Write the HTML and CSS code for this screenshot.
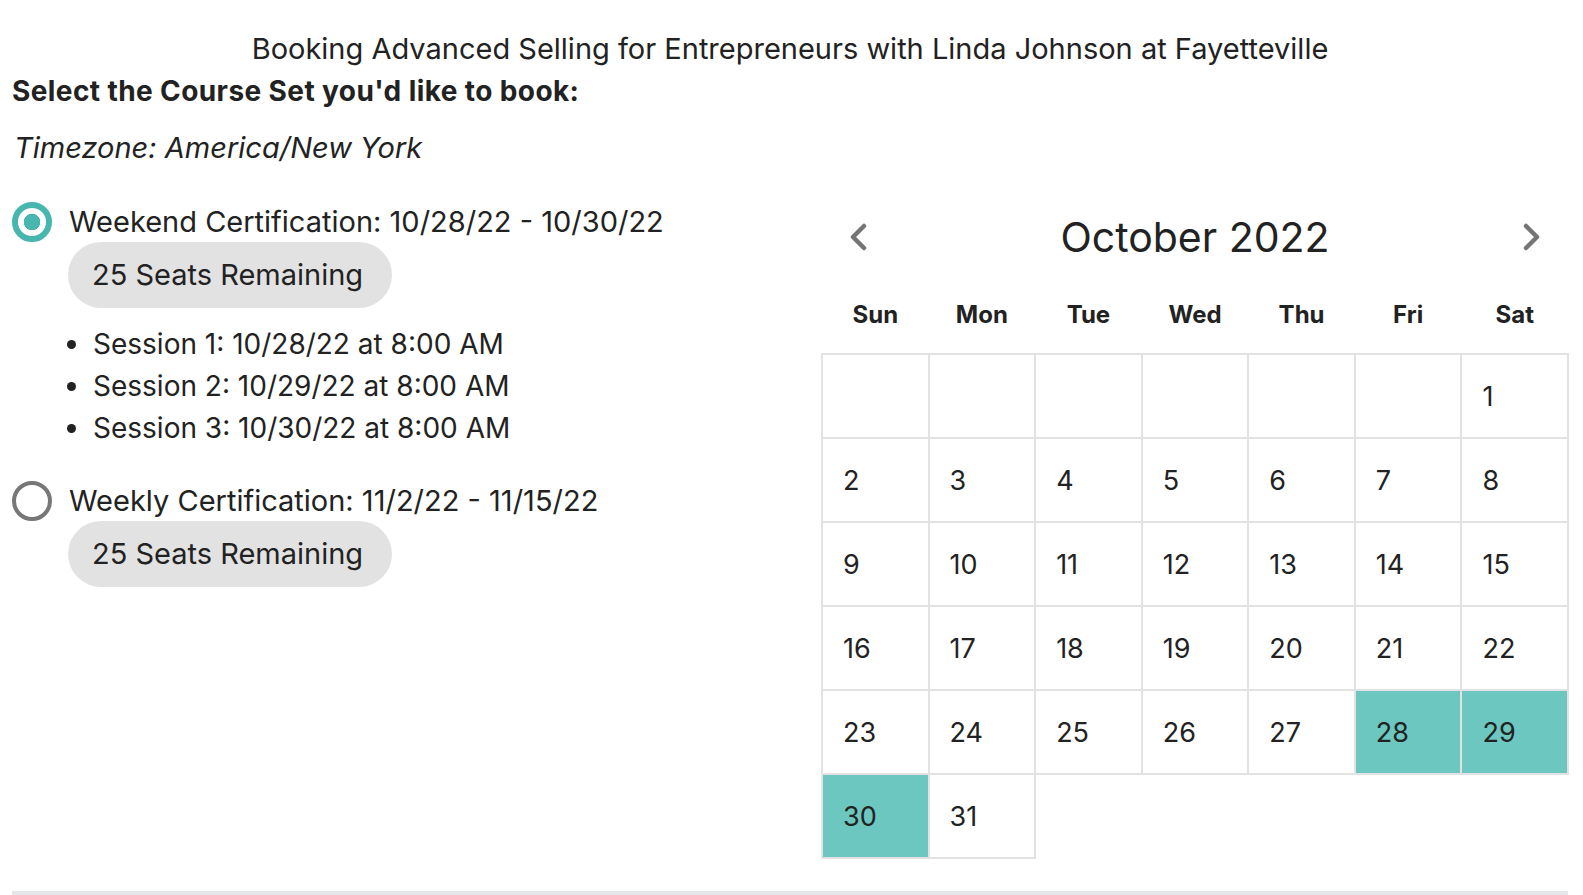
FILE: index.html
```html
<!DOCTYPE html>
<html lang="en">
<head>
    <meta charset="utf-8">
    <meta name="viewport" content="width=device-width, initial-scale=1.0">
    <title>Book a Course Set</title>
    <link rel="stylesheet" href="styles.css">
</head>
<body>
<div class="page">
    <h1 class="title">Booking Advanced Selling for Entrepreneurs with Linda Johnson at Fayetteville</h1>
    <h2 class="prompt">Select the Course Set you'd like to book:</h2>
    <p class="timezone">Timezone: America/New York</p>

    <div class="main">
        <div class="sets">
            <div class="set">
                <label class="set-head">
                    <span class="radio checked"></span>
                    Weekend Certification: 10/28/22 - 10/30/22
                </label>
                <div class="seats">25 Seats Remaining</div>
                <ul class="sessions">
                    <li>Session 1: 10/28/22 at 8:00 AM</li>
                    <li>Session 2: 10/29/22 at 8:00 AM</li>
                    <li>Session 3: 10/30/22 at 8:00 AM</li>
                </ul>
            </div>
            <div class="set">
                <label class="set-head">
                    <span class="radio"></span>
                    Weekly Certification: 11/2/22 - 11/15/22
                </label>
                <div class="seats">25 Seats Remaining</div>
            </div>
        </div>

        <div class="calendar">
            <div class="cal-head">
                <button class="nav" aria-label="Previous month">
                    <svg width="18" height="28" viewBox="0 0 18 28"><path d="M15 3 L4 14 L15 25" /></svg>
                </button>
                <div class="month">October 2022</div>
                <button class="nav" aria-label="Next month">
                    <svg width="18" height="28" viewBox="0 0 18 28"><path d="M3 3 L14 14 L3 25" /></svg>
                </button>
            </div>
            <div class="weekdays">
                <div>Sun</div><div>Mon</div><div>Tue</div><div>Wed</div><div>Thu</div><div>Fri</div><div>Sat</div>
            </div>
            <div class="days" id="days"></div>
        </div>
    </div>

    <hr class="bottom-line">
</div>

<script>
    var days = document.getElementById('days');
    var firstDay = 6; // Oct 1 2022 is a Saturday
    var booked = [28, 29, 30];
    for (var i = 0; i < firstDay; i++) {
        var blank = document.createElement('div');
        blank.className = 'day';
        days.appendChild(blank);
    }
    for (var d = 1; d <= 31; d++) {
        var cell = document.createElement('div');
        cell.className = 'day';
        if (booked.indexOf(d) !== -1) {
            cell.className += ' booked';
        }
        cell.textContent = d;
        days.appendChild(cell);
    }
</script>
</body>
</html>
```

FILE: styles.css
```css
body {
    margin: 0;
    padding: 0;
    background: #fff;
    color: #222;
    font-family: "Inter", "Liberation Sans", sans-serif;
}

.page {
    padding: 29px 15px 0 12px;
}

.title {
    margin: 0;
    font-size: 29px;
    font-weight: 400;
    line-height: 40px;
    text-align: center;
}

.prompt {
    margin: 4px 0 0;
    font-size: 28px;
    font-weight: 700;
    letter-spacing: 0.4px;
    line-height: 36px;
}

.timezone {
    margin: 19px 0 0;
    font-size: 29px;
    font-style: italic;
    line-height: 40px;
    padding-left: 2px;
}

.main {
    display: flex;
    align-items: flex-start;
    margin-top: 34px;
}

.sets {
    flex: 1;
}

.set {
    margin-bottom: 32px;
}

.set-head {
    display: flex;
    align-items: center;
    gap: 17px;
    font-size: 29px;
    line-height: 40px;
    cursor: pointer;
}

.radio {
    width: 40px;
    height: 40px;
    box-sizing: border-box;
    border: 4px solid #777;
    border-radius: 50%;
    flex: none;
}

.radio.checked {
    border: 6px solid #47b6ae;
    background: radial-gradient(circle, #47b6ae 0 8px, #fff 8.5px);
}

.seats {
    display: inline-block;
    margin: 0 0 0 56px;
    padding: 13px 29px 13px 24px;
    font-size: 29px;
    line-height: 40px;
    background: #e2e2e2;
    border-radius: 33px;
}

.sessions {
    list-style: none;
    margin: 15px 0 0;
    padding: 0 0 0 55px;
}

.sessions li {
    display: flex;
    align-items: center;
    gap: 17px;
    font-size: 28px;
    line-height: 42px;
}

.sessions li::before {
    content: "";
    width: 9px;
    height: 9px;
    border-radius: 50%;
    background: #222;
}

.calendar {
    width: 746px;
    margin-top: 7px;
}

.cal-head {
    display: flex;
    align-items: center;
    justify-content: space-between;
    padding: 0 27px;
    height: 56px;
}

.nav {
    border: none;
    background: none;
    padding: 0;
    display: flex;
    cursor: pointer;
}

.nav path {
    fill: none;
    stroke: #757575;
    stroke-width: 4.5;
    stroke-linecap: round;
    stroke-linejoin: round;
}

.month {
    font-size: 41px;
    line-height: 56px;
}

.weekdays {
    display: grid;
    grid-template-columns: repeat(7, 1fr);
    margin-top: 33px;
    font-size: 24px;
    font-weight: 700;
    line-height: 34px;
    text-align: center;
}

.days {
    display: grid;
    grid-template-columns: repeat(7, 1fr);
    grid-auto-rows: 84px;
    margin-top: 22px;
}

.day {
    display: flex;
    align-items: center;
    padding-left: 21px;
    font-size: 27px;
    outline: 2px solid #e2e2e2;
    outline-offset: -1px;
}

.day.booked {
    background: #6bc7c0;
}

.bottom-line {
    margin: 33px 0 0;
    border: none;
    height: 4px;
    background: #e5e7eb;
}
```
